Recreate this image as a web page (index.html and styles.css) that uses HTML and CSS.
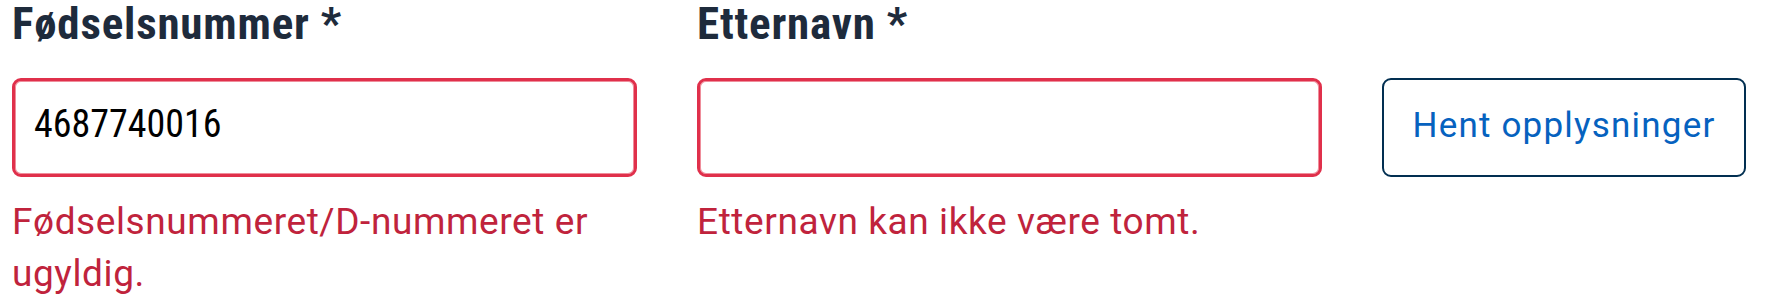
FILE: index.html
```html
<!DOCTYPE html>
<html lang="no">
<head>
<meta charset="utf-8">
<title>Skjema</title>
<link rel="stylesheet" href="styles.css">
</head>
<body>
<form class="form">
  <label class="label" for="fnr">Fødselsnummer *</label>
  <label class="label" for="etternavn">Etternavn *</label>
  <span class="spacer"></span>

  <input class="field field-error" id="fnr" type="text" value="4687740016">
  <input class="field field-error" id="etternavn" type="text" value="">
  <button class="btn" type="button">Hent opplysninger</button>

  <p class="error">Fødselsnummeret/D-nummeret er ugyldig.</p>
  <p class="error">Etternavn kan ikke være tomt.</p>
  <span class="spacer"></span>
</form>
</body>
</html>
```

FILE: styles.css
```css
html, body {
  margin: 0;
  padding: 0;
  background: #ffffff;
}

.form {
  display: grid;
  grid-template-columns: 625px 625px 364px;
  column-gap: 60px;
  padding: 2px 0 0 12px;
  font-family: "Roboto Condensed", "Roboto", "Liberation Sans", sans-serif;
  font-stretch: condensed;
}

.label {
  font-size: 45px;
  font-weight: 700;
  line-height: 44px;
  letter-spacing: 0.8px;
  color: #1e2b3c;
  margin-bottom: 32px;
}

.field {
  box-sizing: border-box;
  height: 99px;
  width: 100%;
  margin: 0;
  padding: 0 19px 7px 19px;
  border: 3px solid #e0304b;
  border-radius: 9px;
  box-shadow: inset 0 0 0 1px #ef8d9b;
  background: #ffffff;
  font-family: "Roboto Condensed", "Roboto", "Liberation Sans", sans-serif;
  font-stretch: condensed;
  font-size: 38px;
  letter-spacing: 0;
  color: #000000;
  outline: none;
}

.btn {
  box-sizing: border-box;
  height: 99px;
  width: 364px;
  margin: 0;
  padding: 0 0 4px 0;
  border: 2px solid #022f51;
  border-radius: 9px;
  background: #ffffff;
  font-family: "Roboto", "Liberation Sans", sans-serif;
  font-stretch: normal;
  font-size: 35px;
  letter-spacing: 1.2px;
  color: #0662bf;
  cursor: pointer;
}

.error {
  margin: 19px 0 0 0;
  font-family: "Roboto", "Liberation Sans", sans-serif;
  font-stretch: normal;
  font-size: 37px;
  line-height: 52px;
  letter-spacing: 0.6px;
  color: #c0233c;
}

.spacer {
  display: block;
}
```
